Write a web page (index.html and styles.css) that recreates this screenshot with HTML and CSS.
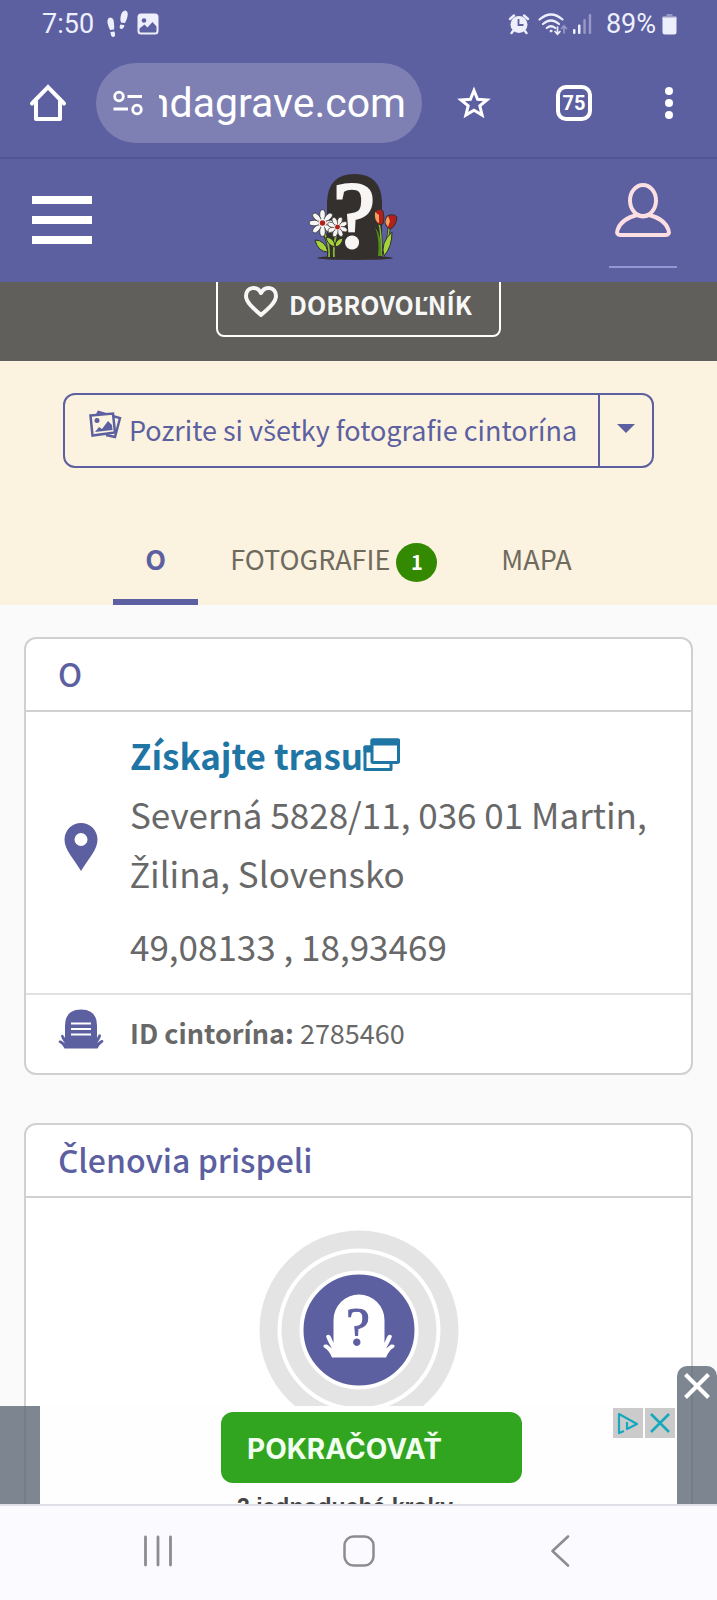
FILE: index.html
```html
<!DOCTYPE html>
<html lang="sk">
<head>
<meta charset="utf-8">
<meta name="viewport" content="width=device-width, initial-scale=1">
<title>Cintorín – Martin</title>
<link rel="stylesheet" href="styles.css">
</head>
<body>
<div class="screen">
  <div class="status">
    <span class="status-text">7:50</span>
    <svg class="steps" width="22" height="28" viewBox="0 0 22 28" fill="currentColor"><path d="M1.500 13Q1 8 4 7.500q4 0 4 6 .5 4 0 6l-4 .5q-1.500-3-2.500-7zM4.500 22l4-.500q1.500 5-1 5.500-3 0-3-5zM14.500 7q1-6.500 5-6.500 3 1 2 6-1 4-2.500 6.500L15 12.500q-1-2-.5-5.500zM14.500 14.500l4 .8q-1 4-3.500 3.700-2.500-1-.5-4.500z"/></svg>
    <svg class="pic" width="22" height="22" viewBox="0 0 22 22"><rect x="0.500" y="0.500" width="21" height="21" rx="3.500" fill="currentColor"/><circle cx="7" cy="7.500" r="2.300" fill="#5c5fa0"/><path d="M2.500 18v-2.500l5-4 3 3 5-5.500 4 4.500V18q0 1.500-1.500 1.500H4Q2.500 19.500 2.500 18z" fill="#5c5fa0"/></svg>
    <span class="spacer"></span>
    <svg width="20" height="20" viewBox="0 0 20 20"><circle cx="10" cy="10.500" r="8.500" fill="currentColor"/><path d="M1 5l4-3.500M19 5l-4-3.500M4.500 16.500L2.500 19M15.500 16.500l2 2.500" stroke="currentColor" stroke-width="2.400" stroke-linecap="round"/><path d="M9.500 5v6h5" fill="none" stroke="#5c5fa0" stroke-width="1.800"/></svg>
    <svg class="wifi" width="29" height="23" viewBox="0 0 29 23" fill="none" stroke="currentColor" stroke-width="2.200" stroke-linecap="round"><path d="M1.500 6.500Q13 -3.500 24.500 6.500M5 11q8-7 16 0M8.800 15q4.200-3.500 8.400 0"/><circle cx="13" cy="18" r="1" fill="currentColor" stroke-width="1"/><path d="M19.500 14v7m-2.500-2.500l2.500 2.700 2.500-2.700" stroke-width="1.700"/><path d="M26 20v-7m-2.500 2.500l2.500-2.700 2.500 2.700" stroke-width="1.700" opacity=".4"/></svg>
    <svg width="19" height="20" viewBox="0 0 19 20" fill="currentColor"><rect y="15" width="2.500" height="5" rx="1"/><rect x="5" y="10.500" width="2.500" height="9.500" rx="1"/><rect x="10.300" y="5" width="2.500" height="15" rx="1" opacity=".4"/><rect x="15.700" width="2.500" height="20" rx="1" opacity=".4"/></svg>
    <span class="status-text battery-text">89%</span>
    <svg width="15" height="21" viewBox="0 0 15 21" fill="currentColor"><path d="M4.500 0h6v2h3q1 0 1 1v2H.500V3q0-1 1-1h3z" opacity=".4"/><path d="M.500 3.500h14V18q0 2.500-2.500 2.500H3Q.500 20.500.500 18z"/></svg>
  </div>

  <div class="toolbar">
    <button class="tool" aria-label="Domov"><svg width="36" height="38" viewBox="0 0 36 38" fill="none" stroke="currentColor" stroke-width="4" stroke-linecap="round" stroke-linejoin="round"><path d="M2 19.500L18 3l16 16.500" stroke-linejoin="miter"/><path d="M6 17v18h24V17"/></svg></button>
    <div class="address">
      <svg width="30" height="26" viewBox="0 0 30 26" fill="none" stroke="currentColor" stroke-width="2.800"><circle cx="6" cy="6.500" r="4.300"/><path d="M14.500 6.500H29M.500 19H15"/><circle cx="24" cy="19.500" r="4.300"/></svg>
      <div class="url-clip"><input class="url" type="text" aria-label="Adresa" value="findagrave.com"></div>
    </div>
    <button class="tool star" aria-label="Pridať záložku"><svg width="34" height="34" viewBox="0 0 34 34" fill="none" stroke="currentColor" stroke-width="3"><path d="M17 4.500l3.600 8.700 9.400.7-7.200 6 2.300 9.100L17 24.200 8.900 29l2.300-9.100-7.200-6 9.400-.7z"/></svg></button>
    <button class="tabs-count" aria-label="Karty">75</button>
    <button class="tool more" aria-label="Viac"><svg width="8" height="32" viewBox="0 0 8 32" fill="currentColor"><circle cx="4" cy="4" r="4"/><circle cx="4" cy="16" r="4"/><circle cx="4" cy="28" r="4"/></svg></button>
  </div>

  <div class="viewport">
    <header class="site-header">
      <button class="menu" aria-label="Ponuka"><span></span><span></span><span></span></button>
      <a class="logo" href="#" aria-label="Find a Grave">
        <svg width="87" height="88" viewBox="0 0 87 88">
          <path d="M16 85V29Q17 1 43.500 1T71 29v56z" fill="#33302d"/>
          <ellipse cx="44" cy="85" rx="38" ry="2" fill="#33302d"/>
          <text x="43" y="73" text-anchor="middle" class="logo-mark" fill="#f7f6f4" stroke="#f7f6f4">?</text>
          <g fill="none" stroke="#33302d" stroke-width="3.500"><path d="M12 58q7 12 6 26M25 62v22"/></g>
          <g fill="none" stroke="#8ab63b" stroke-width="1.800"><path d="M12 58q7 12 6 26M25 62q-3 12-2 22"/></g>
          <path d="M4 67q10 0 13 12Q7 79 4 67zM24 74q-8-2-9-10 9 1 9 10zM24 74q0-8 8-9-1 8-8 9z" fill="#a4d33c" stroke="#33302d"/>
          <g fill="#f7f6f4" stroke="#33302d" stroke-width=".8"><g transform="translate(11.500 50) scale(.92)"><ellipse cy="-9" rx="3" ry="5.500"/><ellipse cy="-9" rx="3" ry="5.500" transform="rotate(45)"/><ellipse cy="-9" rx="3" ry="5.500" transform="rotate(90)"/><ellipse cy="-9" rx="3" ry="5.500" transform="rotate(135)"/><ellipse cy="-9" rx="3" ry="5.500" transform="rotate(180)"/><ellipse cy="-9" rx="3" ry="5.500" transform="rotate(225)"/><ellipse cy="-9" rx="3" ry="5.500" transform="rotate(270)"/><ellipse cy="-9" rx="3" ry="5.500" transform="rotate(315)"/><circle r="4.500" stroke="none"/><circle r="3" fill="#b3201c" stroke="none"/></g></g>
          <g fill="#f7f6f4" stroke="#33302d" stroke-width=".8"><g transform="translate(26.500 54) rotate(20) scale(.8)"><ellipse cy="-8" rx="3" ry="5"/><ellipse cy="-8" rx="3" ry="5" transform="rotate(45)"/><ellipse cy="-8" rx="3" ry="5" transform="rotate(90)"/><ellipse cy="-8" rx="3" ry="5" transform="rotate(135)"/><ellipse cy="-8" rx="3" ry="5" transform="rotate(180)"/><ellipse cy="-8" rx="3" ry="5" transform="rotate(225)"/><ellipse cy="-8" rx="3" ry="5" transform="rotate(270)"/><ellipse cy="-8" rx="3" ry="5" transform="rotate(315)"/><circle r="4" stroke="none"/><circle r="3" fill="#b3201c" stroke="none"/></g></g>
          <path d="M68 50q3 14 2 33M78 55q-1 15-6 28" fill="none" stroke="#33302d" stroke-width="3"/>
          <path d="M68 50q3 14 2 33M78 55q-1 15-6 28" fill="none" stroke="#8ab63b" stroke-width="1.500"/>
          <path d="M64 54q8 11 6 29h-3q2-16-3-29z" fill="#518f1c"/><path d="M81 59q0 15-8 24-4-13 8-24z" fill="#a4d33c" stroke="#33302d"/>
          <path d="M64 38l5-2 3 2q2 7 0 13-6 2-8-4z" fill="#b3201c" stroke="#33302d"/><path d="M64 39l4 3v8q-5-2-4-11z" fill="#f5a05c"/>
          <path d="M76 43q6-3 10 1-1 10-7 12-8-4-3-13z" fill="#b3201c" stroke="#33302d"/><path d="M77 43l2 5-2 6q-5-5 0-11z" fill="#f5a05c"/>
        </svg>
      </a>
      <a class="account" href="#" aria-label="Účet"><svg width="56" height="56" viewBox="0 0 56 56" fill="none" stroke="currentColor" stroke-width="4" stroke-linejoin="round"><ellipse cx="28" cy="18.500" rx="13" ry="15.500"/><path d="M22 33Q6 37 2.500 48q-1.500 5 3 5h45q4.500 0 3-5Q50 37 34 33q-6 3-12 0z"/></svg></a>
    </header>

    <section class="hero">
      <button class="volunteer"><svg width="36" height="34" viewBox="0 0 36 34" fill="none" stroke="currentColor" stroke-width="4" stroke-linejoin="round"><path d="M18 30C10 23 3 17 3 11c0-9 11-11 15-3 4-8 15-6 15 3 0 6-7 12-15 19z"/></svg><span>DOBROVO<span class="ext">Ľ</span>NÍK</span></button>
    </section>

    <section class="intro">
      <div class="photo-group">
        <button class="photos"><svg width="32" height="28" viewBox="0 0 32 28"><path d="M8 4l1.500-3 21.500 6-5 19-9-2" fill="none" stroke="currentColor" stroke-width="2.400"/><path d="M1.500 4.500L24 2.500l2 19-22.500 3z" fill="#fbf2df" stroke="currentColor" stroke-width="2.500"/><circle cx="8" cy="9.500" r="2.500" fill="currentColor"/><path d="M6 21l4-5 3 2 6-8 4 4 .5 5z" fill="currentColor"/></svg><span>Pozrite si v<span class="ext">š</span>etky fotografie cintorína</span></button>
        <button class="more-photos" aria-label="Ďalšie možnosti"><svg width="18" height="9" viewBox="0 0 18 9"><path d="M0 0h18L9 9z" fill="currentColor"/></svg></button>
      </div>
      <nav class="tabs">
        <a class="tab active" href="#">O</a>
        <a class="tab" href="#">FOTOGRAFIE<span class="badge">1</span></a>
        <a class="tab" href="#">MAPA</a>
      </nav>
    </section>

    <main class="content">
      <section class="card">
        <h2 class="card-title">O</h2>
        <div class="row location">
          <span class="row-icon"><svg width="34" height="48" viewBox="0 0 34 48"><path d="M17 0a16.500 16.500 0 0 1 16.500 16.500C33.500 27 24 36 17 48 10 36 .500 27 .500 16.500A16.500 16.500 0 0 1 17 0zm0 10a6.500 6.500 0 1 0 0 13 6.500 6.500 0 0 0 0-13z" fill="currentColor"/></svg></span>
          <div class="place">
            <a class="route" href="#">Získajte trasu<svg width="37" height="33" viewBox="0 0 37 33" fill="none" stroke="currentColor" stroke-width="3" stroke-linejoin="round"><path d="M8 9H2v22.500h26V26"/><path d="M2 9h6v4H2z" fill="currentColor"/><rect x="9" y="2" width="26.500" height="22.500" rx="1"/><path d="M9 2h26.500v4H9z" fill="currentColor"/></svg></a>
            <p class="street">Severná 5828/11, 036 01 Martin, <span class="ext">Ž</span>ilina, Slovensko</p>
            <p class="coords">49,08133 , 18,93469</p>
          </div>
        </div>
        <div class="row identifier">
          <span class="row-icon"><svg width="46" height="40" viewBox="0 0 46 40"><path d="M6.500 39.500Q4 35 .8 33.300 0 31 3 31.500l4 2.800Q3 29 3 26.500q2-2 3 1L7 29V16.500Q7 .5 23 .5t16 16V29l1-2q1-3 3-1 0 3-4 8l4-2.800q3-.5 2.200 1.800Q42 35 39.500 39.500z" fill="currentColor"/><path d="M13 14.500h20M13 20h20M13 25.500h20" stroke="#fff" stroke-width="2.200"/></svg></span>
          <p class="cemetery-id"><strong>ID cintorína:</strong> 2785460</p>
        </div>
      </section>

      <section class="card">
        <h2 class="card-title"><span class="ext">Č</span>lenovia prispeli</h2>
        <div class="members">
          <svg width="200" height="200" viewBox="0 0 200 200"><circle cx="100" cy="100" r="99.500" fill="#e4e4e4"/><circle cx="100" cy="100" r="79.500" fill="none" stroke="#fff" stroke-width="4"/><circle cx="100" cy="100" r="57.500" fill="#5c5fa0" stroke="#fff" stroke-width="4"/><path d="M73 127.500Q70 120 65 117.500 63 114 68 114.500l5 4Q68 110 67 106q3-3 5 1l2.500 6V90a25.500 25.500 0 0 1 51 0v23l2.500-6q2-4 5-1-1 4-6 12.500l5-4q5-.5 3 3-5 2.500-8 10z" fill="#fff"/><text x="99" y="115" text-anchor="middle" class="avatar-mark" fill="#5c5fa0" stroke="#5c5fa0">?</text></svg>
        </div>
      </section>
    </main>

    <aside class="ad">
      <div class="ad-side"></div>
      <div class="ad-body">
        <div class="ad-copy">
          <button class="ad-button">POKRAČOVAŤ</button>
          <p class="ad-note">3 jednoduché kroky</p>
        </div>
        <div class="ad-options">
          <button class="ad-option" aria-label="AdChoices"><svg width="24" height="24" viewBox="0 0 24 24" fill="none" stroke="currentColor" stroke-width="2.200" stroke-linejoin="round"><path d="M8 20l-5 2V3l18 10-10 5V11M11 7v1"/></svg></button>
          <button class="ad-option" aria-label="Zavrieť"><svg width="20" height="20" viewBox="0 0 20 20" stroke="currentColor" stroke-width="2.500"><path d="M1 1l18 18M19 1L1 19"/></svg></button>
        </div>
      </div>
      <button class="ad-close" aria-label="Zavrieť reklamu"><svg width="26" height="26" viewBox="0 0 26 26" stroke="currentColor" stroke-width="4"><path d="M1.500 1.500l23 23M24.500 1.500l-23 23"/></svg></button>
    </aside>
  </div>

  <nav class="system-nav">
    <button class="system-key" aria-label="Posledné"><svg width="30" height="32" viewBox="0 0 30 32" stroke="currentColor" stroke-width="2.800" stroke-linecap="round"><path d="M2.500 2v28M15 2v28M27.500 2v28"/></svg></button>
    <button class="system-key" aria-label="Plocha"><svg width="32" height="32" viewBox="0 0 32 32" fill="none" stroke="currentColor" stroke-width="2.500"><rect x="1.500" y="1.500" width="29" height="29" rx="9"/></svg></button>
    <button class="system-key" aria-label="Späť"><svg width="20" height="32" viewBox="0 0 20 32" fill="none" stroke="currentColor" stroke-width="2.600" stroke-linecap="round" stroke-linejoin="round"><path d="M18 1.500L2.500 16 18 30.500"/></svg></button>
  </nav>
</div>
</body>
</html>
```
FILE: styles.css
```css
* { box-sizing: border-box; }

body {
  margin: 0;
  font-family: "Noto Sans CJK SC", "Noto Sans", sans-serif;
  color: #686868;
}

button, input {
  margin: 0;
  padding: 0;
  border: 0;
  background: none;
  font: inherit;
  color: inherit;
}

a { color: inherit; text-decoration: none; }
p, h2 { margin: 0; }
svg { display: block; flex: none; overflow: visible; }

/* Letters with a caron, which the main family lacks */
.ext {
  font-family: "Open Sans", sans-serif;
  line-height: 1;
}

.screen {
  display: flex;
  flex-direction: column;
  height: 100vh;
  overflow: hidden;
}

/* Status bar and browser toolbar */
.status {
  display: flex;
  align-items: center;
  height: 48px;
  padding: 0 40px 0 42px;
  background: #5c5fa0;
  color: #eeeffc;
  font: 27px/48px Roboto, sans-serif;
}
.steps { margin-left: 12px; }
.pic { margin-left: 9px; }
.spacer { flex: 1; }
.wifi { margin: 0 6px 0 9px; }
.battery-text { margin: 0 6px 0 14px; }

.toolbar {
  display: flex;
  align-items: center;
  height: 111px;
  padding: 0 44px 0 30px;
  border-bottom: 2px solid #52559a;
  background: #5c5fa0;
  color: #fff;
}
.address {
  display: flex;
  flex: 1;
  align-items: center;
  gap: 16px;
  min-width: 0;
  height: 80px;
  margin: 0 35px 0 30px;
  padding: 0 16px 0 17px;
  border-radius: 40px;
  background: #7e80b4;
}
.url-clip {
  display: flex;
  flex: 1;
  justify-content: flex-end;
  min-width: 0;
  overflow: hidden;
}
.url {
  flex: none;
  width: 300px;
  font: 41px/56px Roboto, sans-serif;
  text-align: right;
}
.tabs-count {
  flex: none;
  width: 36px;
  height: 36px;
  margin: 0 73px 0 65px;
  border: 4px solid #fff;
  border-radius: 10px;
  font: bold 20px/28px Roboto, sans-serif;
}

/* Site header */
.viewport {
  position: relative;
  flex: 1;
  min-height: 0;
  overflow: hidden;
  background: #fafafa;
}
.site-header {
  display: flex;
  align-items: center;
  justify-content: space-between;
  height: 123px;
  padding: 0 40px 0 32px;
  background: #5c5fa0;
}
.menu {
  display: grid;
  gap: 12px;
  width: 60px;
  padding-bottom: 2px;
}
.menu span { height: 8px; background: #fff; }
.logo { padding: 0 0 8px 8px; }
.logo-mark { font: 94px "Liberation Serif", serif; stroke-width: 3; }
.avatar-mark { font: 54px "Liberation Serif", serif; stroke-width: 1; }
.account {
  display: flex;
  justify-content: center;
  width: 68px;
  margin-top: 8px;
  padding-bottom: 28px;
  border-bottom: 2px solid #9299d2;
  color: #fbdfe2;
}

.hero {
  display: flex;
  align-items: flex-end;
  justify-content: center;
  height: 79px;
  padding-bottom: 24px;
  overflow: hidden;
  background: #605f5b;
}
.volunteer {
  display: flex;
  flex: none;
  align-items: center;
  gap: 10px;
  height: 75px;
  padding: 8px 27px 0 25px;
  border: 2px solid #fff;
  border-radius: 8px;
  color: #f7f7f7;
  font-size: 25px;
  font-weight: bold;
}
.volunteer svg { margin-bottom: 4px; }

.intro {
  padding: 32px 24px 0;
  background: #fbf2df;
}
.photo-group {
  display: flex;
  width: max-content;
  margin: 0 auto;
  border: 2px solid #5c5fa0;
  border-radius: 12px;
  color: #5c5fa0;
}
.photos {
  display: flex;
  align-items: center;
  gap: 8px;
  height: 71px;
  padding: 0 21px 3px 24px;
  font-size: 27px;
}
.photos svg { margin-bottom: 8px; }
.more-photos {
  display: flex;
  align-items: center;
  justify-content: center;
  width: 54px;
  padding-bottom: 5px;
  border-left: 2px solid #5c5fa0;
}
.tabs {
  display: flex;
  justify-content: center;
  margin-top: 45px;
}
.tab {
  display: flex;
  align-items: center;
  gap: 6px;
  height: 92px;
  padding: 4px 32px 0;
  border-bottom: 6px solid transparent;
  color: #6f6a5e;
  font-size: 27px;
}
.tab.active { border-color: #5c5fa0; color: #5c5fa0; font-weight: bold; }
.badge {
  width: 41px;
  height: 39px;
  margin-top: 8px;
  border-radius: 50%;
  background: #338a00;
  color: #fff;
  font-size: 20px;
  font-weight: bold;
  line-height: 37px;
  text-align: center;
}

/* Cards */
.content {
  display: grid;
  gap: 48px;
  padding: 32px 24px;
}
.card {
  border: 2px solid #d0d0d0;
  border-radius: 12px;
  background: #fff;
}
.card-title {
  height: 73px;
  padding: 0 32px;
  border-bottom: 2px solid #d0d0d0;
  color: #5c5fa0;
  font-size: 32px;
  font-weight: 500;
  line-height: 69px;
}
.card-title .ext { font-weight: 600; }
.row {
  display: flex;
  align-items: center;
  gap: 26px;
  padding: 0 32px;
}
.row-icon {
  display: flex;
  justify-content: center;
  width: 46px;
  padding-bottom: 6px;
  color: #5c5fa0;
}
.location {
  padding-top: 13px;
  padding-bottom: 18px;
  border-bottom: 2px solid #e1e1e1;
  font-size: 35px;
  line-height: 59px;
}
.place { flex: 1; }
.route {
  display: flex;
  align-items: center;
  color: #1f75a4;
  font-weight: bold;
}
.coords { margin-top: 14px; }
.identifier {
  height: 78px;
  padding-bottom: 4px;
  font-size: 27px;
}
.members {
  display: flex;
  justify-content: center;
  height: 400px;
  padding-top: 32px;
}

/* Sticky advertisement */
.ad {
  position: absolute;
  right: 0;
  bottom: 0;
  left: 0;
  display: flex;
  align-items: flex-end;
}
.ad-side {
  width: 40px;
  height: 98px;
  background: rgba(94, 105, 117, .8);
}
.ad-body {
  position: relative;
  display: flex;
  flex: 1;
  justify-content: center;
  height: 98px;
  padding: 6px 0 0 26px;
  overflow: hidden;
  background: #fefefe;
}
.ad-copy { width: 301px; }
.ad-button {
  width: 100%;
  height: 71px;
  padding: 4px 0 0 26px;
  border-radius: 12px;
  background: #31a520;
  color: #f2fff0;
  font: bold 28px/67px Inter, sans-serif;
  text-align: left;
}
.ad-note {
  padding: 10px 0 0 16px;
  color: #454545;
  font: bold 23px/28px "Liberation Sans", sans-serif;
  white-space: nowrap;
}
.ad-options {
  position: absolute;
  top: 2px;
  right: 2px;
  display: flex;
  gap: 2px;
}
.ad-option {
  display: flex;
  align-items: center;
  justify-content: center;
  width: 30px;
  height: 30px;
  background: #cbcbcb;
  color: #16a9bd;
}
.ad-close {
  display: flex;
  justify-content: center;
  width: 40px;
  height: 138px;
  padding-top: 7px;
  border-radius: 10px 10px 0 0;
  background: rgba(94, 105, 117, .8);
  color: #fff;
}

/* System navigation */
.system-nav {
  display: grid;
  grid-template-columns: repeat(3, 1fr);
  height: 96px;
  padding: 0 57px 4px;
  border-top: 2px solid #dfdfe8;
  background: #fafaff;
  color: #8d8d91;
}
.system-key {
  display: flex;
  align-items: center;
  justify-content: center;
}
```
